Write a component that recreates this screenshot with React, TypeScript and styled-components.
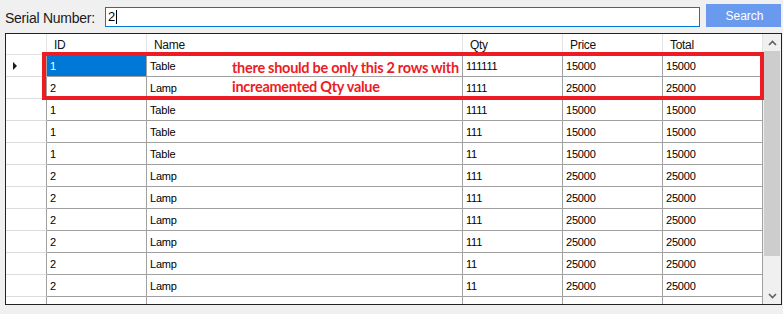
import React from "react";
import styled, { createGlobalStyle } from "styled-components";

const Global = createGlobalStyle`
  html, body { margin: 0; padding: 0; background: #f0f0f0; }
  body { font-family: "Liberation Sans", Arial, sans-serif; overflow: hidden; }
  * { box-sizing: border-box; }
`;

const Page = styled.div`
  width: 783px;
  height: 314px;
  background: #f0f0f0;
  display: flex;
  flex-direction: column;
`;

const TopBar = styled.div`
  height: 32px;
  display: flex;
  align-items: flex-start;
  padding-left: 5px;
`;

const Label = styled.div`
  margin-top: 10px;
  font-size: 14px;
  letter-spacing: -0.25px;
  color: #1a1a1a;
  width: 100px;
`;

const Input = styled.div`
  margin-top: 7px;
  width: 595px;
  height: 20px;
  border: 1px solid #0078d7;
  background: #fff;
  font-size: 13px;
  line-height: 18px;
  padding-left: 2px;
  color: #000;
  display: flex;
  align-items: center;
`;

const Caret = styled.span`
  display: inline-block;
  width: 1px;
  height: 14px;
  background: #000;
  margin-left: 1px;
`;

const Button = styled.div`
  margin-top: 4px;
  margin-left: 6px;
  width: 75px;
  height: 23px;
  background: #6a9aee;
  color: #fff;
  font-size: 12px;
  display: flex;
  align-items: center;
  justify-content: center;
  padding-left: 2px;
`;

const GridFrame = styled.div`
  position: relative;
  margin-top: 1px;
  margin-left: 5px;
  width: 777px;
  height: 272px;
  border: 1px solid #222;
  background: #fff;
  display: flex;
`;

const Table = styled.div`
  width: 757px;
  height: 100%;
  overflow: hidden;
  display: flex;
  flex-direction: column;
`;

const COLS = "41px 100px 316px 100px 100px 100px";

const HeaderRow = styled.div`
  display: grid;
  grid-template-columns: ${COLS};
  height: 21px;
  flex: none;
`;

const HeadCell = styled.div`
  border-right: 1px solid #e3e3e3;
  border-bottom: 1px solid #e3e3e3;
  font-size: 12px;
  letter-spacing: -0.3px;
  color: #111;
  padding-left: 7px;
  padding-top: 2px;
  line-height: 18px;
  white-space: nowrap;
`;

const Row = styled.div`
  display: grid;
  grid-template-columns: ${COLS};
  height: 22px;
  flex: none;
`;

const RowHead = styled.div`
  border-right: 1px solid #a0a0a0;
  border-bottom: 1px solid #dcdcdc;
  display: flex;
  align-items: center;
  padding-left: 7px;
`;

const Arrow = styled.span`
  width: 0;
  height: 0;
  border-top: 4px solid transparent;
  border-bottom: 4px solid transparent;
  border-left: 4px solid #1a1a1a;
`;

const Cell = styled.div<{ $selected?: boolean }>`
  border-right: 1px solid #a0a0a0;
  border-bottom: 1px solid #a0a0a0;
  background: ${(p) => (p.$selected ? "#0078d7" : "#fff")};
  color: ${(p) => (p.$selected ? "#fff" : "#000")};
  font-size: 11px;
  letter-spacing: -0.2px;
  padding-left: 3px;
  padding-top: 2px;
  line-height: 19px;
  white-space: nowrap;
  overflow: hidden;
`;

const ScrollBar = styled.div`
  width: 18px;
  height: 100%;
  background: #f0f0f0;
  display: flex;
  flex-direction: column;
  align-items: center;
`;

const ArrowBtn = styled.div`
  height: 17px;
  width: 100%;
  display: flex;
  align-items: center;
  justify-content: center;
  flex: none;
`;

const Track = styled.div`
  flex: 1;
  width: 100%;
  display: flex;
  align-items: flex-start;
  justify-content: center;
`;

const Thumb = styled.div`
  width: 16px;
  height: 205px;
  flex: none;
  background: #cdcdcd;
`;

const Annotation = styled.div`
  position: absolute;
  left: 36px;
  top: 18px;
  width: 722px;
  height: 48px;
  border: 4px solid #ed1c24;
  pointer-events: none;
`;

const Note = styled.div`
  position: absolute;
  left: 186px;
  top: 2px;
  color: #ed1c24;
  font-family: Lato, "Liberation Sans", sans-serif;
  font-weight: 700;
  font-size: 14.5px;
  line-height: 19px;
  letter-spacing: -0.28px;
  white-space: nowrap;
`;

const rows = [
  ["1", "Table", "111111", "15000", "15000"],
  ["2", "Lamp", "1111", "25000", "25000"],
  ["1", "Table", "1111", "15000", "15000"],
  ["1", "Table", "111", "15000", "15000"],
  ["1", "Table", "11", "15000", "15000"],
  ["2", "Lamp", "111", "25000", "25000"],
  ["2", "Lamp", "111", "25000", "25000"],
  ["2", "Lamp", "111", "25000", "25000"],
  ["2", "Lamp", "111", "25000", "25000"],
  ["2", "Lamp", "11", "25000", "25000"],
  ["2", "Lamp", "11", "25000", "25000"],
  ["2", "Lamp", "11", "25000", "25000"],
];

const Chevron = ({ up }: { up?: boolean }) => (
  <svg width="9" height="6" viewBox="0 0 9 6">
    <path
      d={up ? "M1 5 L4.5 1.5 L8 5" : "M1 1 L4.5 4.5 L8 1"}
      fill="none"
      stroke="#606060"
      strokeWidth="1.6"
    />
  </svg>
);

export default function App() {
  return (
    <Page>
      <Global />
      <TopBar>
        <Label>Serial Number:</Label>
        <Input>
          2<Caret />
        </Input>
        <Button>Search</Button>
      </TopBar>
      <GridFrame>
        <Table>
          <HeaderRow>
            <HeadCell />
            <HeadCell>ID</HeadCell>
            <HeadCell>Name</HeadCell>
            <HeadCell>Qty</HeadCell>
            <HeadCell>Price</HeadCell>
            <HeadCell>Total</HeadCell>
          </HeaderRow>
          {rows.map((r, i) => (
            <Row key={i}>
              <RowHead>{i === 0 && <Arrow />}</RowHead>
              {r.map((v, j) => (
                <Cell key={j} $selected={i === 0 && j === 0}>
                  {v}
                </Cell>
              ))}
            </Row>
          ))}
        </Table>
        <ScrollBar>
          <ArrowBtn>
            <Chevron up />
          </ArrowBtn>
          <Track>
            <Thumb />
          </Track>
          <ArrowBtn>
            <Chevron />
          </ArrowBtn>
        </ScrollBar>
        <Annotation>
          <Note>
            there should be only this 2 rows with
            <br />
            increamented Qty value
          </Note>
        </Annotation>
      </GridFrame>
    </Page>
  );
}
